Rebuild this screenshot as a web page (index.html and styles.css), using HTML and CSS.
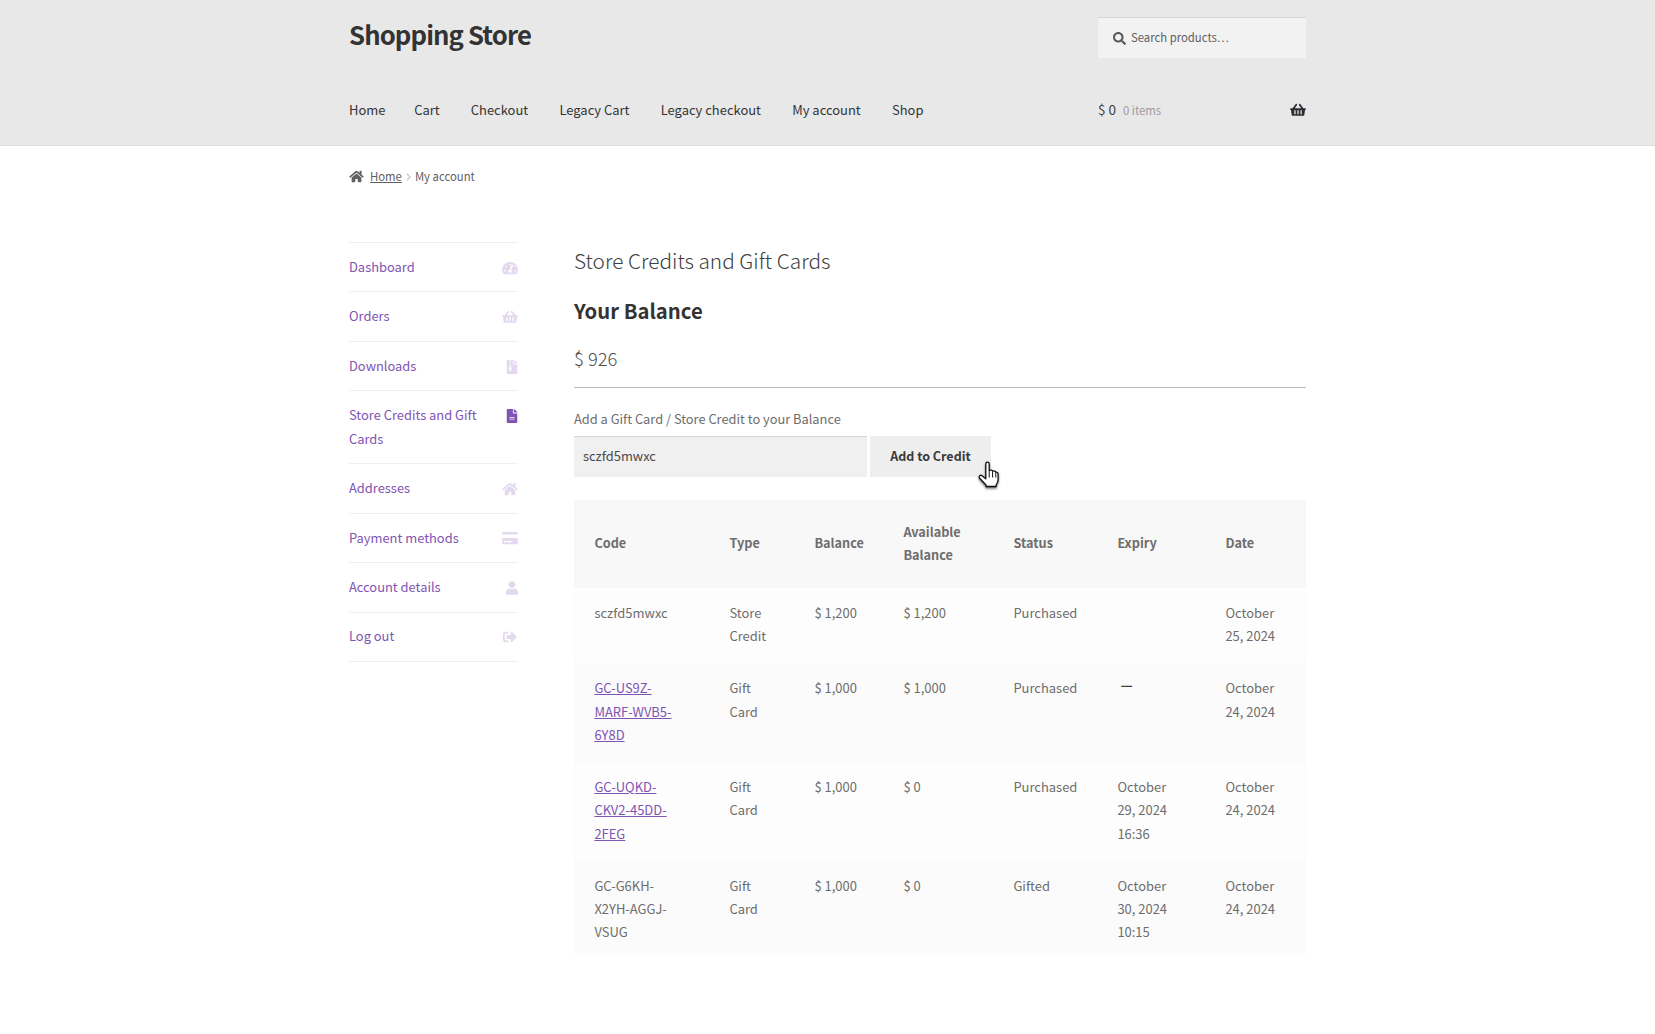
FILE: index.html
```html
<!DOCTYPE html>
<html lang="en">
<head>
<meta charset="utf-8">
<title>My account – Shopping Store</title>
<link rel="stylesheet" href="styles.css">
</head>
<body>
<header class="site-header">
  <div class="wrap">
    <div class="brand-row">
      <div class="site-title">Shopping Store</div>
      <form class="search">
        <svg class="search-icon" viewBox="0 0 512 512"><path d="M505 442.700L405.300 343c-4.500-4.500-10.600-7-17-7H372c27.600-35.300 44-79.700 44-128C416 93.100 322.900 0 208 0S0 93.100 0 208s93.100 208 208 208c48.300 0 92.700-16.400 128-44v16.300c0 6.400 2.500 12.500 7 17l99.700 99.700c9.400 9.400 24.600 9.400 33.900 0l28.300-28.300c9.400-9.400 9.400-24.600.1-34zM208 336c-70.700 0-128-57.200-128-128 0-70.700 57.200-128 128-128 70.700 0 128 57.200 128 128 0 70.700-57.200 128-128 128z"/></svg>
        <span class="search-text">Search products…</span>
      </form>
    </div>
    <div class="nav-row">
      <nav class="nav">
        <a class="nav-first">Home</a><a>Cart</a><a>Checkout</a><a>Legacy Cart</a><a>Legacy checkout</a><a>My account</a><a>Shop</a>
      </nav>
      <div class="mini-cart">
        <span class="cart-amount">$ 0</span>
        <span class="cart-count">0 items</span>
        <svg class="cart-icon" viewBox="0 0 576 512"><path d="M576 216v16c0 13.300-10.700 24-24 24h-8l-26.100 182.800C515.600 452.500 504 464 490.400 464H85.600c-13.600 0-25.200-11.500-27.500-25.200L32 256h-8c-13.300 0-24-10.700-24-24v-16c0-13.300 10.700-24 24-24h67.300L198.100 45.100c10.400-14.300 30.400-17.500 44.700-7.100 14.300 10.400 17.500 30.400 7.100 44.700L170.400 192h235.200L326.100 82.700c-10.400-14.300-7.200-34.300 7.100-44.700 14.300-10.400 34.300-7.200 44.700 7.100L484.700 192H552c13.300 0 24 10.700 24 24zM312 392V280c0-13.300-10.700-24-24-24s-24 10.700-24 24v112c0 13.300 10.700 24 24 24s24-10.700 24-24zm112 0V280c0-13.300-10.700-24-24-24s-24 10.700-24 24v112c0 13.300 10.700 24 24 24s24-10.700 24-24zm-224 0V280c0-13.300-10.700-24-24-24s-24 10.700-24 24v112c0 13.300 10.700 24 24 24s24-10.700 24-24z"/></svg>
      </div>
    </div>
  </div>
</header>

<div class="wrap">
  <div class="breadcrumb">
    <svg class="crumb-home" viewBox="0 0 576 512"><path d="M280.400 148.300L96 300.100V464a16 16 0 0 0 16 16l112.100-.3a16 16 0 0 0 15.900-16V368a16 16 0 0 1 16-16h64a16 16 0 0 1 16 16v95.600a16 16 0 0 0 16 16.100L464 480a16 16 0 0 0 16-16V300L295.700 148.300a12.200 12.200 0 0 0-15.300 0zM571.600 251.500L488 182.600V44.100a12 12 0 0 0-12-12h-56a12 12 0 0 0-12 12v72.600L318.500 43a48 48 0 0 0-61 0L4.300 251.500a12 12 0 0 0-1.600 16.900l25.500 31A12 12 0 0 0 45.200 301l235.200-193.700a12.200 12.200 0 0 1 15.300 0L530.900 301a12 12 0 0 0 16.900-1.600l25.500-31a12 12 0 0 0-1.700-16.900z"/></svg>
    <a class="crumb-link">Home</a>
    <svg class="crumb-sep" viewBox="0 0 6 10"><path d="M1 1l4 4-4 4" fill="none" stroke="#c9c9c9" stroke-width="1.600"/></svg>
    <span>My account</span>
  </div>

  <div class="columns">
    <aside class="side">
      <a class="side-item"><span>Dashboard</span>
        <svg class="side-icon" viewBox="0 0 576 512"><path d="M288 32C128.900 32 0 160.900 0 320c0 52.800 14.300 102.300 39.100 144.800 5.600 9.600 16.300 15.200 27.400 15.200h443c11.100 0 21.800-5.600 27.400-15.200C561.800 422.300 576 372.800 576 320c0-159.100-128.900-288-288-288zm0 64c14.700 0 26.600 10.100 30.300 23.700-1.100 2.300-2.600 4.200-3.500 6.700l-9.200 27.700c-5.100 3.500-11 6-17.600 6-17.700 0-32-14.300-32-32S270.300 96 288 96zM96 384c-17.700 0-32-14.300-32-32s14.300-32 32-32 32 14.300 32 32-14.300 32-32 32zm48-160c-17.700 0-32-14.300-32-32s14.300-32 32-32 32 14.300 32 32-14.300 32-32 32zm246.800-72.400l-61.300 184C343.100 347.300 352 364.500 352 384c0 11.700-3.400 22.600-8.900 32H232.900c-5.500-9.400-8.900-20.300-8.900-32 0-33.900 26.500-61.400 59.900-63.600l61.300-184c4.200-12.600 17.700-19.500 30.400-15.200 12.500 4.200 19.400 17.800 15.200 30.400zm14.700 57.200l15.500-46.600c3.500-1.300 7.100-2.200 11-2.200 17.700 0 32 14.300 32 32s-14.300 32-32 32c-11.400 0-20.900-6.300-26.500-15.200zM480 384c-17.700 0-32-14.300-32-32s14.300-32 32-32 32 14.300 32 32-14.300 32-32 32z"/></svg></a>
      <a class="side-item"><span>Orders</span>
        <svg class="side-icon" viewBox="0 0 576 512"><path d="M576 216v16c0 13.300-10.700 24-24 24h-8l-26.100 182.800C515.600 452.500 504 464 490.400 464H85.600c-13.600 0-25.200-11.500-27.500-25.200L32 256h-8c-13.300 0-24-10.700-24-24v-16c0-13.300 10.700-24 24-24h67.300L198.100 45.100c10.400-14.300 30.400-17.500 44.700-7.100 14.300 10.400 17.500 30.400 7.100 44.700L170.400 192h235.200L326.100 82.700c-10.400-14.300-7.200-34.300 7.100-44.700 14.300-10.400 34.300-7.200 44.700 7.100L484.700 192H552c13.300 0 24 10.700 24 24zM312 392V280c0-13.300-10.700-24-24-24s-24 10.700-24 24v112c0 13.300 10.700 24 24 24s24-10.700 24-24zm112 0V280c0-13.300-10.700-24-24-24s-24 10.700-24 24v112c0 13.300 10.700 24 24 24s24-10.700 24-24zm-224 0V280c0-13.300-10.700-24-24-24s-24 10.700-24 24v112c0 13.300 10.700 24 24 24s24-10.700 24-24z"/></svg></a>
      <a class="side-item"><span>Downloads</span>
        <svg class="side-icon side-icon-file" viewBox="0 0 384 512"><path d="M377 105L279.100 7c-4.500-4.500-10.600-7-17-7H256v128h128v-6.100c0-6.300-2.500-12.400-7-16.900zM128.400 336c-17.900 0-32.400 12.100-32.400 27 0 15 14.600 27 32.500 27s32.400-12.100 32.400-27-14.600-27-32.500-27zM224 136V0h-63.600v32h-32V0H24C10.700 0 0 10.700 0 24v464c0 13.300 10.700 24 24 24h336c13.300 0 24-10.700 24-24V160H248c-13.200 0-24-10.800-24-24zM95.900 32h32v32h-32zm32.300 384c-33.200 0-58-30.400-51.400-62.900L96.400 256v-32h32v-32h-32v-32h32v-32h-32V96h32V64h32v32h-32v32h32v32h-32v32h32v32h-32v32h22.100c5.700 0 10.700 4.100 11.800 9.700l17.300 87.700c6.400 32.400-18.400 62.600-51.400 62.600z"/></svg></a>
      <a class="side-item side-item-active"><span>Store Credits and Gift Cards</span>
        <svg class="side-icon side-icon-file" viewBox="0 0 384 512"><path d="M224 136V0H24C10.700 0 0 10.700 0 24v464c0 13.300 10.700 24 24 24h336c13.300 0 24-10.700 24-24V160H248c-13.200 0-24-10.800-24-24zm64 236c0 6.600-5.400 12-12 12H108c-6.600 0-12-5.400-12-12v-8c0-6.600 5.400-12 12-12h168c6.600 0 12 5.400 12 12v8zm0-64c0 6.600-5.400 12-12 12H108c-6.600 0-12-5.400-12-12v-8c0-6.600 5.400-12 12-12h168c6.600 0 12 5.400 12 12v8zm96-186.100v6.100H256V0h6.100c6.400 0 12.500 2.500 17 7l97.900 98c4.500 4.500 7 10.600 7 16.900z"/></svg></a>
      <a class="side-item"><span>Addresses</span>
        <svg class="side-icon" viewBox="0 0 576 512"><path d="M280.400 148.300L96 300.100V464a16 16 0 0 0 16 16l112.100-.3a16 16 0 0 0 15.900-16V368a16 16 0 0 1 16-16h64a16 16 0 0 1 16 16v95.600a16 16 0 0 0 16 16.100L464 480a16 16 0 0 0 16-16V300L295.700 148.300a12.200 12.200 0 0 0-15.300 0zM571.600 251.500L488 182.600V44.100a12 12 0 0 0-12-12h-56a12 12 0 0 0-12 12v72.600L318.500 43a48 48 0 0 0-61 0L4.300 251.500a12 12 0 0 0-1.600 16.900l25.500 31A12 12 0 0 0 45.200 301l235.200-193.700a12.200 12.200 0 0 1 15.300 0L530.900 301a12 12 0 0 0 16.900-1.600l25.500-31a12 12 0 0 0-1.700-16.900z"/></svg></a>
      <a class="side-item"><span>Payment methods</span>
        <svg class="side-icon" viewBox="0 0 576 512"><path d="M0 432c0 26.500 21.500 48 48 48h480c26.500 0 48-21.500 48-48V256H0v176zm192-68c0-6.600 5.400-12 12-12h136c6.600 0 12 5.400 12 12v40c0 6.600-5.400 12-12 12H204c-6.600 0-12-5.400-12-12v-40zm-128 0c0-6.600 5.400-12 12-12h72c6.600 0 12 5.400 12 12v40c0 6.600-5.400 12-12 12H76c-6.600 0-12-5.400-12-12v-40zM576 80v48H0V80c0-26.500 21.500-48 48-48h480c26.500 0 48 21.500 48 48z"/></svg></a>
      <a class="side-item"><span>Account details</span>
        <svg class="side-icon side-icon-file" viewBox="0 0 448 512"><path d="M224 256c70.700 0 128-57.300 128-128S294.700 0 224 0 96 57.300 96 128s57.300 128 128 128zm89.600 32h-16.700c-22.200 10.200-46.900 16-72.900 16s-50.600-5.800-72.900-16h-16.700C60.200 288 0 348.200 0 422.400V464c0 26.500 21.500 48 48 48h352c26.500 0 48-21.500 48-48v-41.600c0-74.200-60.200-134.400-134.400-134.400z"/></svg></a>
      <a class="side-item"><span>Log out</span>
        <svg class="side-icon" viewBox="0 0 512 512"><path d="M497 273L329 441c-15 15-41 4.500-41-17v-96H152c-13.300 0-24-10.700-24-24v-96c0-13.300 10.700-24 24-24h136V88c0-21.400 25.900-32 41-17l168 168c9.300 9.400 9.300 24.600 0 34zM192 436v-40c0-6.600-5.400-12-12-12H96c-17.700 0-32-14.300-32-32V160c0-17.700 14.300-32 32-32h84c6.600 0 12-5.400 12-12V76c0-6.600-5.400-12-12-12H96c-53 0-96 43-96 96v192c0 53 43 96 96 96h84c6.600 0 12-5.400 12-12z"/></svg></a>
    </aside>

    <main class="content">
      <h1 class="page-title">Store Credits and Gift Cards</h1>
      <h2 class="balance-title">Your Balance</h2>
      <p class="balance">$ 926</p>
      <hr class="rule">
      <p class="add-label">Add a Gift Card / Store Credit to your Balance</p>
      <form class="add-form">
        <div class="code-input">sczfd5mwxc</div>
        <div class="add-button">Add to Credit</div>
        <svg class="pointer" viewBox="0 0 26 34"><defs><filter id="soft" x="-30%" y="-30%" width="160%" height="160%"><feDropShadow dx="0" dy="1.500" stdDeviation="1.300" flood-color="#000" flood-opacity=".55"/></filter></defs><path filter="url(#soft)" d="M10.800 6c0-2.400 3.400-2.400 3.400 0v6.500c1.600-.8 3-.4 3.400.8 1.300-.7 2.800-.3 3.200 1 1.200-.4 2.300.3 2.300 1.700v5.500c0 2.500-1 4-2 5.500v1.500H11v-1.500c-1.500-1.800-4.500-4.500-6.500-7-1.300-1.800 1-3.500 2.600-2.200l3.700 3z" fill="#fff" stroke="#111" stroke-width="1.300" stroke-linejoin="round"/><path d="M14.200 13v6.500M17.600 14v5.500M20.800 15v4.500" stroke="#111" stroke-width="1" fill="none"/></svg>
      </form>

      <table class="credits">
        <colgroup>
          <col class="c-code"><col class="c-type"><col class="c-bal"><col class="c-avail"><col class="c-status"><col class="c-expiry"><col class="c-date">
        </colgroup>
        <thead>
          <tr><th>Code</th><th>Type</th><th>Balance</th><th>Available Balance</th><th>Status</th><th>Expiry</th><th>Date</th></tr>
        </thead>
        <tbody>
          <tr><td>sczfd5mwxc</td><td>Store Credit</td><td>$ 1,200</td><td>$ 1,200</td><td>Purchased</td><td></td><td>October 25, 2024</td></tr>
          <tr><td><a class="code-link">GC-US9Z-MARF-WVB5-6Y8D</a></td><td>Gift Card</td><td>$ 1,000</td><td>$ 1,000</td><td>Purchased</td><td><span class="dash">—</span></td><td>October 24, 2024</td></tr>
          <tr><td><a class="code-link">GC-UQKD-CKV2-45DD-2FEG</a></td><td>Gift Card</td><td>$ 1,000</td><td>$ 0</td><td>Purchased</td><td>October 29, 2024 16:36</td><td>October 24, 2024</td></tr>
          <tr><td>GC-G6KH-X2YH-AGGJ-VSUG</td><td>Gift Card</td><td>$ 1,000</td><td>$ 0</td><td>Gifted</td><td>October 30, 2024 10:15</td><td>October 24, 2024</td></tr>
        </tbody>
      </table>
    </main>
  </div>
</div>
</body>
</html>
```

FILE: styles.css
```css
* { box-sizing: border-box; }
html, body { margin: 0; padding: 0; }
body {
  background: #fff;
  color: #6d6d6d;
  font-family: "Noto Sans CJK SC", "Noto Sans", sans-serif;
  font-size: 12.96px;
  line-height: 23.3px;
}
.wrap { width: 957px; margin-left: 349px; }

.site-header {
  background: #e8e8e9;
  height: 146px;
  border-bottom: 1px solid #dcdcdc;
}
.brand-row { display: flex; justify-content: space-between; height: 91px; padding-top: 17px; }
.site-title {
  font-size: 25.7px;
  font-weight: 700;
  line-height: 34px;
  letter-spacing: -0.9px;
  color: #333;
}
.search {
  width: 208px;
  height: 41px;
  background: #f2f2f2;
  border-top: 1px solid #d6d6d6;
  display: flex;
  align-items: center;
  padding-left: 15px;
  font-size: 11.34px;
  color: #5f5f5f;
}
.search-icon { width: 13px; height: 13px; fill: #5a5a5a; margin-right: 5px; }

.nav-row { display: flex; justify-content: space-between; align-items: center; height: 38px; }
.nav { display: flex; gap: 31.2px; color: #333; font-size: 12.96px; }
.nav-first { margin-right: -2.5px; }
.mini-cart { width: 208px; display: flex; align-items: center; color: #404040; font-size: 13.5px; }
.cart-count { color: #9b9b9b; font-size: 11.34px; margin-left: 7px; padding-top: 2px; }
.cart-icon { width: 16px; height: 14px; fill: #2c2d33; margin-left: auto; }

.breadcrumb {
  display: flex;
  align-items: center;
  height: 23px;
  margin-top: 19px;
  font-size: 11.34px;
  color: #5f5f5f;
}
.crumb-home { width: 15px; height: 13px; fill: #606060; margin-right: 6px; }
.crumb-link { text-decoration: underline; }
.crumb-sep { width: 5px; height: 8px; margin: 0 4px; }

.columns { display: flex; margin-top: 54px; }
.side { width: 169px; flex: none; border-top: 1px solid #efefef; align-self: flex-start; }
.side-item {
  display: flex;
  justify-content: space-between;
  align-items: flex-start;
  padding: 11.8px 0 13.4px;
  border-bottom: 1px solid #efefef;
  color: #7f54b3;
  font-size: 12.9px;
}
.side-item span { max-width: 135px; }
.side-icon { width: 16px; height: 14px; fill: #e3d9ef; margin-top: 5.800px; flex: none; }
.side-icon-file { width: 12px; }
.side-item-active .side-icon { fill: #7f54b3; }

.content { width: 732px; margin-left: 56px; }
.page-title {
  margin: 0;
  font-size: 20.8px;
  font-weight: 300;
  line-height: 32px;
  color: #404040;
  padding-top: 2px;
}
.balance-title {
  margin: 17px 0 0;
  font-size: 20.3px;
  font-weight: 700;
  line-height: 34px;
  color: #333;
}
.balance { margin: 17px 0 0; font-size: 18.4px; font-weight: 300; line-height: 28px; color: #505050; }
.rule { margin: 15px 0 0; border: 0; border-top: 1px solid #bdbdbd; }
.add-label { margin: 19px 0 0; font-size: 12.84px; color: #6d6d6d; }

.add-form { position: relative; display: flex; margin-top: 6px; }
.code-input {
  width: 293px;
  height: 41px;
  background: #f0f0f0;
  border-top: 1px solid #d6d6d6;
  padding: 0 9px;
  line-height: 38px;
  font-size: 12.9px;
  color: #4a4a4a;
}
.add-button {
  width: 121px;
  height: 41px;
  margin-left: 3px;
  background: #eeeeee;
  text-align: center;
  line-height: 39px;
  font-size: 12.5px;
  font-weight: 700;
  color: #3a3a3a;
}
.pointer { position: absolute; left: 401px; top: 22px; width: 26px; height: 34px; }

.credits {
  width: 732px;
  table-layout: fixed;
  border-collapse: collapse;
  margin-top: 23px;
  font-size: 12.96px;
}
.c-code { width: 135px; }
.c-type { width: 85px; }
.c-bal { width: 89px; }
.c-avail { width: 110px; }
.c-status { width: 104px; }
.c-expiry { width: 108px; }
.c-date { width: 101px; }
.credits th {
  text-align: left;
  font-size: 12.7px;
  font-weight: 700;
  background: #f8f8f8;
  padding: 19.400px 14px 21.400px 20.4px;
  color: #6d6d6d;
}
.credits td { vertical-align: top; padding: 13.4px 20px 15.4px 20.4px; background: #fdfdfd; }
.credits tbody tr:nth-child(even) td { background: #fbfbfb; }
.credits tbody tr:last-child td { padding-bottom: 11px; }
.code-link { color: #7f54b3; text-decoration: underline; }
.dash { color: #404040; font-size: 13.500px; font-weight: 700; line-height: 0; padding-left: 3px; vertical-align: 3.200px; }
```
